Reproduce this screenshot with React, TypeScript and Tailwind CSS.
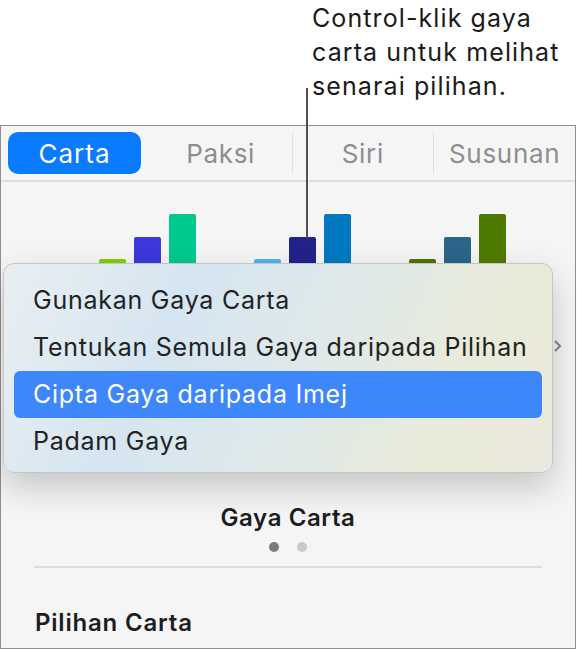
import React from 'react';

const groups = [
  ['#80cf00', '#3c38dc', '#00c98f'],
  ['#4cb6ec', '#23228a', '#0079c0'],
  ['#4f7300', '#2b6587', '#4f7a00'],
];

const heights = [30, 52, 75];

const menuItems = [
  'Gunakan Gaya Carta',
  'Tentukan Semula Gaya daripada Pilihan',
  'Cipta Gaya daripada Imej',
  'Padam Gaya',
];

const App = () => {
  return (
    <div
      className="relative w-[577px] h-[649px] overflow-hidden bg-white text-[#1d1d1f]"
      style={{ fontFamily: 'Inter, "Noto Sans", sans-serif' }}
    >
      {/* callout */}
      <div className="pl-[312px] pt-[1px] h-[125px] text-[25px] leading-[34px] tracking-[1.1px] text-[#1a1a1a]">
        Control-klik gaya
        <br />
        carta untuk melihat
        <br />
        senarai pilihan.
      </div>

      {/* inspector panel */}
      <div className="w-[576px] h-[524px] border border-[#8f8f8f] bg-[#f5f5f5] flex flex-col">
        <div className="grid grid-cols-4 h-[56px] pl-[7px] pt-[6px] border-b-2 border-[#dedede] text-[26px] tracking-[0.7px]">
          <div className="flex items-start">
            <div className="w-[133px] h-[42px] rounded-[10px] bg-[#0a7bff] text-white flex items-center justify-center tracking-[1px]">
              Carta
            </div>
          </div>
          <div className="h-[42px] flex items-center justify-center text-[#8d8d92]">Paksi</div>
          <div className="h-[42px] flex items-center justify-center text-[#8d8d92] border-l border-[#e0e0e0]">
            Siri
          </div>
          <div className="h-[42px] flex items-center justify-center text-[#8d8d92] border-l border-[#e0e0e0]">
            Susunan
          </div>
        </div>

        {/* chart style thumbnails */}
        <div className="h-[320px] flex pl-[98px] gap-[58px] pt-[32px]">
          {groups.map((g, i) => (
            <div key={i} className="flex items-end gap-[8px] h-[105px]">
              {g.map((c, j) => (
                <div
                  key={j}
                  className="w-[27px] rounded-t-[2px]"
                  style={{ background: c, height: heights[j] + 30 }}
                />
              ))}
            </div>
          ))}
        </div>

        <div className="text-center font-semibold text-[24px] leading-[30px] tracking-[0.6px] mt-[1px]">Gaya Carta</div>
        <div className="flex justify-center gap-[18px] mt-[9px]">
          <div className="w-[10px] h-[10px] rounded-full bg-[#7a7a7a]" />
          <div className="w-[10px] h-[10px] rounded-full bg-[#c9c9c9]" />
        </div>
        <div className="mx-[33px] mt-[14px] h-[2px] bg-[#dddddd]" />
        <div className="pl-[34px] mt-[40px] font-semibold text-[24px] leading-[30px] tracking-[0.8px]">Pilihan Carta</div>
      </div>

      {/* leader line */}
      <div className="absolute left-[306px] top-[88px] w-[2px] h-[150px] bg-[#505050]" />

      {/* submenu chevron peeking out */}
      <svg className="absolute left-[553px] top-[339px]" width="9" height="14" viewBox="0 0 9 14">
        <path d="M2 2 L7 7 L2 12" fill="none" stroke="#8a8a8a" strokeWidth="2.2" />
      </svg>

      {/* context menu */}
      <div
        className="absolute left-[3px] top-[263px] w-[550px] h-[210px] rounded-[11px] border border-[#c4c6c6] shadow-[0_14px_34px_rgba(0,0,0,0.2)] px-[10px] pt-[13px] text-[25px] tracking-[0.75px] text-[#222]"
        style={{
          background:
            'linear-gradient(115deg, #e9eff2 0%, #d5e5f1 30%, #dfe9ea 55%, #e9ebd9 80%, #ebe8dd 100%)',
        }}
      >
        {menuItems.map((t, i) => (
          <div
            key={i}
            className={
              i === 2
                ? 'h-[47px] flex items-center pl-[19px] rounded-[6px] bg-[#3e87fa] text-white'
                : 'h-[47px] flex items-center pl-[19px]'
            }
          >
            {t}
          </div>
        ))}
      </div>
    </div>
  );
};

export default App;
